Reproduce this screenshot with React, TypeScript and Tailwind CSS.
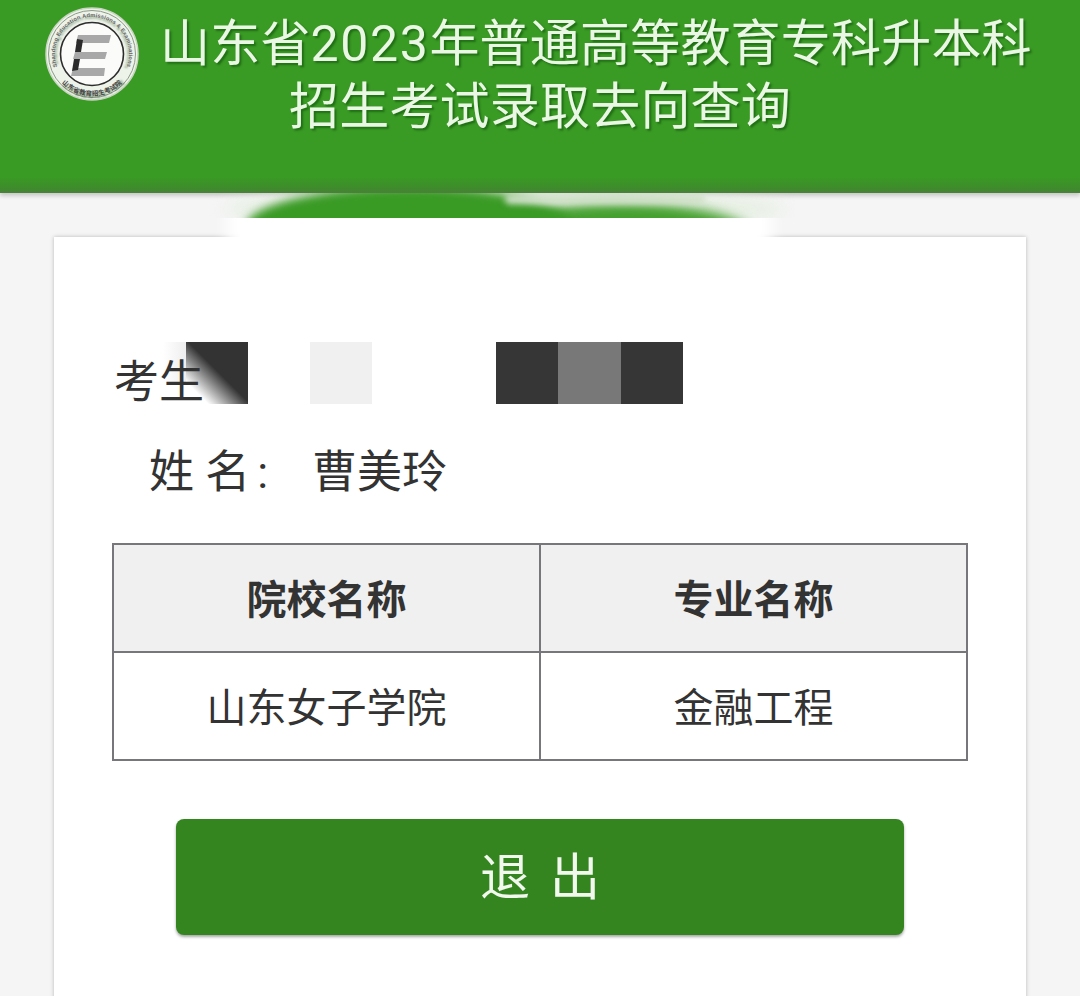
import React from "react";

const FONT = 'font-["Roboto","Noto_Sans_CJK_SC",sans-serif]';

function Logo() {
  return (
    <svg width="96" height="96" viewBox="0 0 96 96" className="block">
      <defs>
        <path id="ringTop" d="M 15.96 66.5 A 37 37 0 1 1 80.04 66.5" fill="none" />
        <path id="ringBottom" d="M 12 69 A 41.5 41.5 0 0 0 84 69" fill="none" />
      </defs>
      <circle cx="48" cy="48" r="46" fill="#eef3ea" stroke="#c9d6c2" strokeWidth="1.5" />
      <circle cx="48" cy="48" r="43.5" fill="none" stroke="#8d9a88" strokeWidth="1" />
      <text fontSize="5.6" fill="#666" fontFamily="Liberation Sans, sans-serif" fontWeight="700">
        <textPath href="#ringTop" startOffset="50%" textAnchor="middle">Shandong Education Admissions &amp; Examinations</textPath>
      </text>
      <text fontSize="6.5" fill="#444" fontFamily="Noto Sans CJK SC, sans-serif" fontWeight="700">
        <textPath href="#ringBottom" startOffset="50%" textAnchor="middle">山东省教育招生考试院</textPath>
      </text>
      <circle cx="48" cy="48" r="31.5" fill="#fbfcfa" stroke="#2c2c2c" strokeWidth="1.6" />
      <path d="M34 29 H67 L65 37 H32 Z" fill="#a8a8a8" />
      <path d="M31 46 H63 L61 53 H29 Z" fill="#a8a8a8" />
      <path d="M29 62 H61 L60 70 H27 Z" fill="#a8a8a8" />
      <path d="M33 33 L39 34 L37 46 L31 46 Z" fill="#2b2b2b" />
      <path d="M30 53 L36 53 L34 64 L28 65 Z" fill="#2b2b2b" />
    </svg>
  );
}

export default function App() {
  return (
    <div className={`${FONT} relative w-[1080px] h-[996px] overflow-hidden bg-[#f5f5f5] text-[#333]`}>
      <header className="h-[193px] bg-[linear-gradient(to_bottom,#399a24_0%,#399a24_92%,#3f8a2c_98%,#4c7f3c_100%)] shadow-[0_3px_4px_rgba(0,0,0,0.18)] text-[#eaf7e4] text-[50px] leading-[61px] tracking-[0.2px] [text-shadow:2px_2px_2px_rgba(0,60,0,0.45)]">
        <div className="flex items-start pt-[6px] pl-[44px]">
          <div className="w-[96px] h-[61px] shrink-0">
            <Logo />
          </div>
          <h1 className="ml-[20px] font-normal whitespace-nowrap pt-[8px]">
            山东省<span className="tracking-[1.6px]">2023</span>年普通高等教育专科升本科
          </h1>
        </div>
        <div className="pl-[289px] pt-[2px] whitespace-nowrap">招生考试录取去向查询</div>
      </header>

      {/* blurred retouch over the header edge */}
      <div className="absolute left-[205px] top-[193px] w-[590px] h-[25px] overflow-hidden z-10">
        <div className="absolute left-[20px] top-[-4px] w-[560px] h-[40px] rounded-[50%] bg-[#e6efe2] blur-[8px]" />
        <div className="absolute left-[285px] top-[10px] w-[265px] h-[70px] rounded-[50%] bg-[#44a02e] blur-[6px]" />
        <div className="absolute left-[40px] top-[-6px] w-[330px] h-[82px] rounded-[50%] bg-[#399a24] blur-[5px]" />
        <div className="absolute left-[300px] top-[2px] w-[200px] h-[9px] rounded-full bg-[#cfe0c8] blur-[3px]" />
      </div>
      <div className="absolute left-[205px] top-[218px] w-[590px] h-[44px] overflow-hidden z-10">
        <div className="absolute left-[22px] top-[-20px] w-[545px] h-[80px] bg-white blur-[8px]" />
      </div>

      <main className="relative mx-[54px] mt-[44px] h-[800px] bg-white shadow-[0_0_4px_rgba(0,0,0,0.25)] pt-[105px]">
        <div className="flex h-[62px] pl-[60px]">
          <span className="relative z-10 w-[90px] pt-[17px] text-[45px] leading-[47px] whitespace-nowrap">考生</span>
          <div className="w-[23px] h-[40px] ml-[-41px] bg-[linear-gradient(to_right,#ffffff,#eeeeee)]" />
          <div className="w-[62px] h-[62px] bg-[linear-gradient(to_top_right,#ffffff_18%,#333333_52%)]" />
          <div className="w-[62px] h-[62px] ml-[62px] bg-[#f0f0f0]" />
          <div className="w-[62px] h-[62px] ml-[124px] bg-[#363636]" />
          <div className="w-[63px] h-[62px] bg-[#787878]" />
          <div className="w-[62px] h-[62px] bg-[#363636]" />
        </div>

        <div className="flex items-center h-[67px] mt-[35px] pl-[95px] text-[45px] leading-[67px] whitespace-nowrap">
          <span className="w-[163px]">
            姓 名<span className="ml-[7px]">:</span>
          </span>
          <span>曹美玲</span>
        </div>

        <table className="ml-[58px] mt-[37px] w-[856px] h-[217px] border-collapse table-fixed text-[40px]">
          <tbody>
            <tr className="h-[108px] bg-[#f0f0f0] font-bold">
              <td className="border-2 border-[#77777b] text-center pt-[5px]">院校名称</td>
              <td className="border-2 border-[#77777b] text-center pt-[5px]">专业名称</td>
            </tr>
            <tr className="h-[108px]">
              <td className="border-2 border-[#77777b] text-center pt-[5px]">山东女子学院</td>
              <td className="border-2 border-[#77777b] text-center pt-[5px]">金融工程</td>
            </tr>
          </tbody>
        </table>

        <button className="flex justify-center items-center gap-[20px] ml-[122px] mt-[58px] w-[728px] h-[116px] rounded-[8px] bg-[#348520] shadow-[0_2px_3px_rgba(0,0,0,0.35)] text-[#f2f8ee] text-[50px] leading-[116px] pt-[2px]">
          <span>退</span>
          <span>出</span>
        </button>
      </main>
    </div>
  );
}
